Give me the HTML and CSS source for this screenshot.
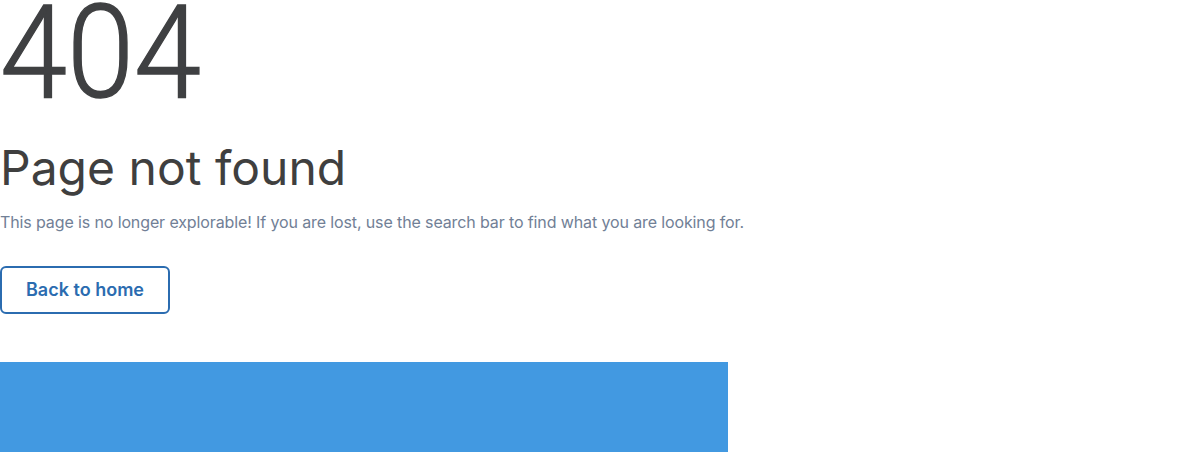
FILE: index.html
```html
<!DOCTYPE html>
<html lang="en">
<head>
<meta charset="utf-8">
<title>404 - Page not found</title>
<link rel="stylesheet" href="styles.css">
</head>
<body>
<main class="page">
  <div class="code">404</div>
  <h1 class="title">Page not found</h1>
  <p class="message">This page is no longer explorable! If you are lost, use the search bar to find what you are looking for.</p>
  <div class="actions">
    <a class="btn" href="#">Back to home</a>
  </div>
  <div class="illustration"></div>
</main>
</body>
</html>
```

FILE: styles.css
```css
html, body {
  margin: 0;
  padding: 0;
  background: #ffffff;
}
body {
  font-family: Inter, "Noto Sans", sans-serif;
  overflow: hidden;
  height: 452px;
}
.page {
  display: flex;
  flex-direction: column;
  align-items: flex-start;
}
.code {
  font-family: Roboto, sans-serif;
  font-weight: 300;
  font-size: 130px;
  line-height: 106px;
  height: 107px;
  color: #3f4042;
  -webkit-text-stroke: 1.4px #3f4042;
  transform: scaleX(0.93);
  transform-origin: left top;
}
.title {
  margin: 32px 0 0;
  font-size: 48px;
  font-weight: 400;
  line-height: 1.2;
  color: #3f3f3f;
}
.message {
  margin: 13px 0 0;
  font-size: 16px;
  line-height: 24px;
  letter-spacing: -0.12px;
  color: #718096;
}
.actions {
  margin-top: 32px;
}
.btn {
  display: inline-block;
  padding: 10px 24px;
  border: 2px solid #2b6cb0;
  border-radius: 6px;
  font-size: 18px;
  font-weight: 600;
  line-height: 24px;
  color: #2b6cb0;
  text-decoration: none;
}
.illustration {
  margin-top: 48px;
  width: 728px;
  height: 90px;
  background: #4299e1;
}
```
